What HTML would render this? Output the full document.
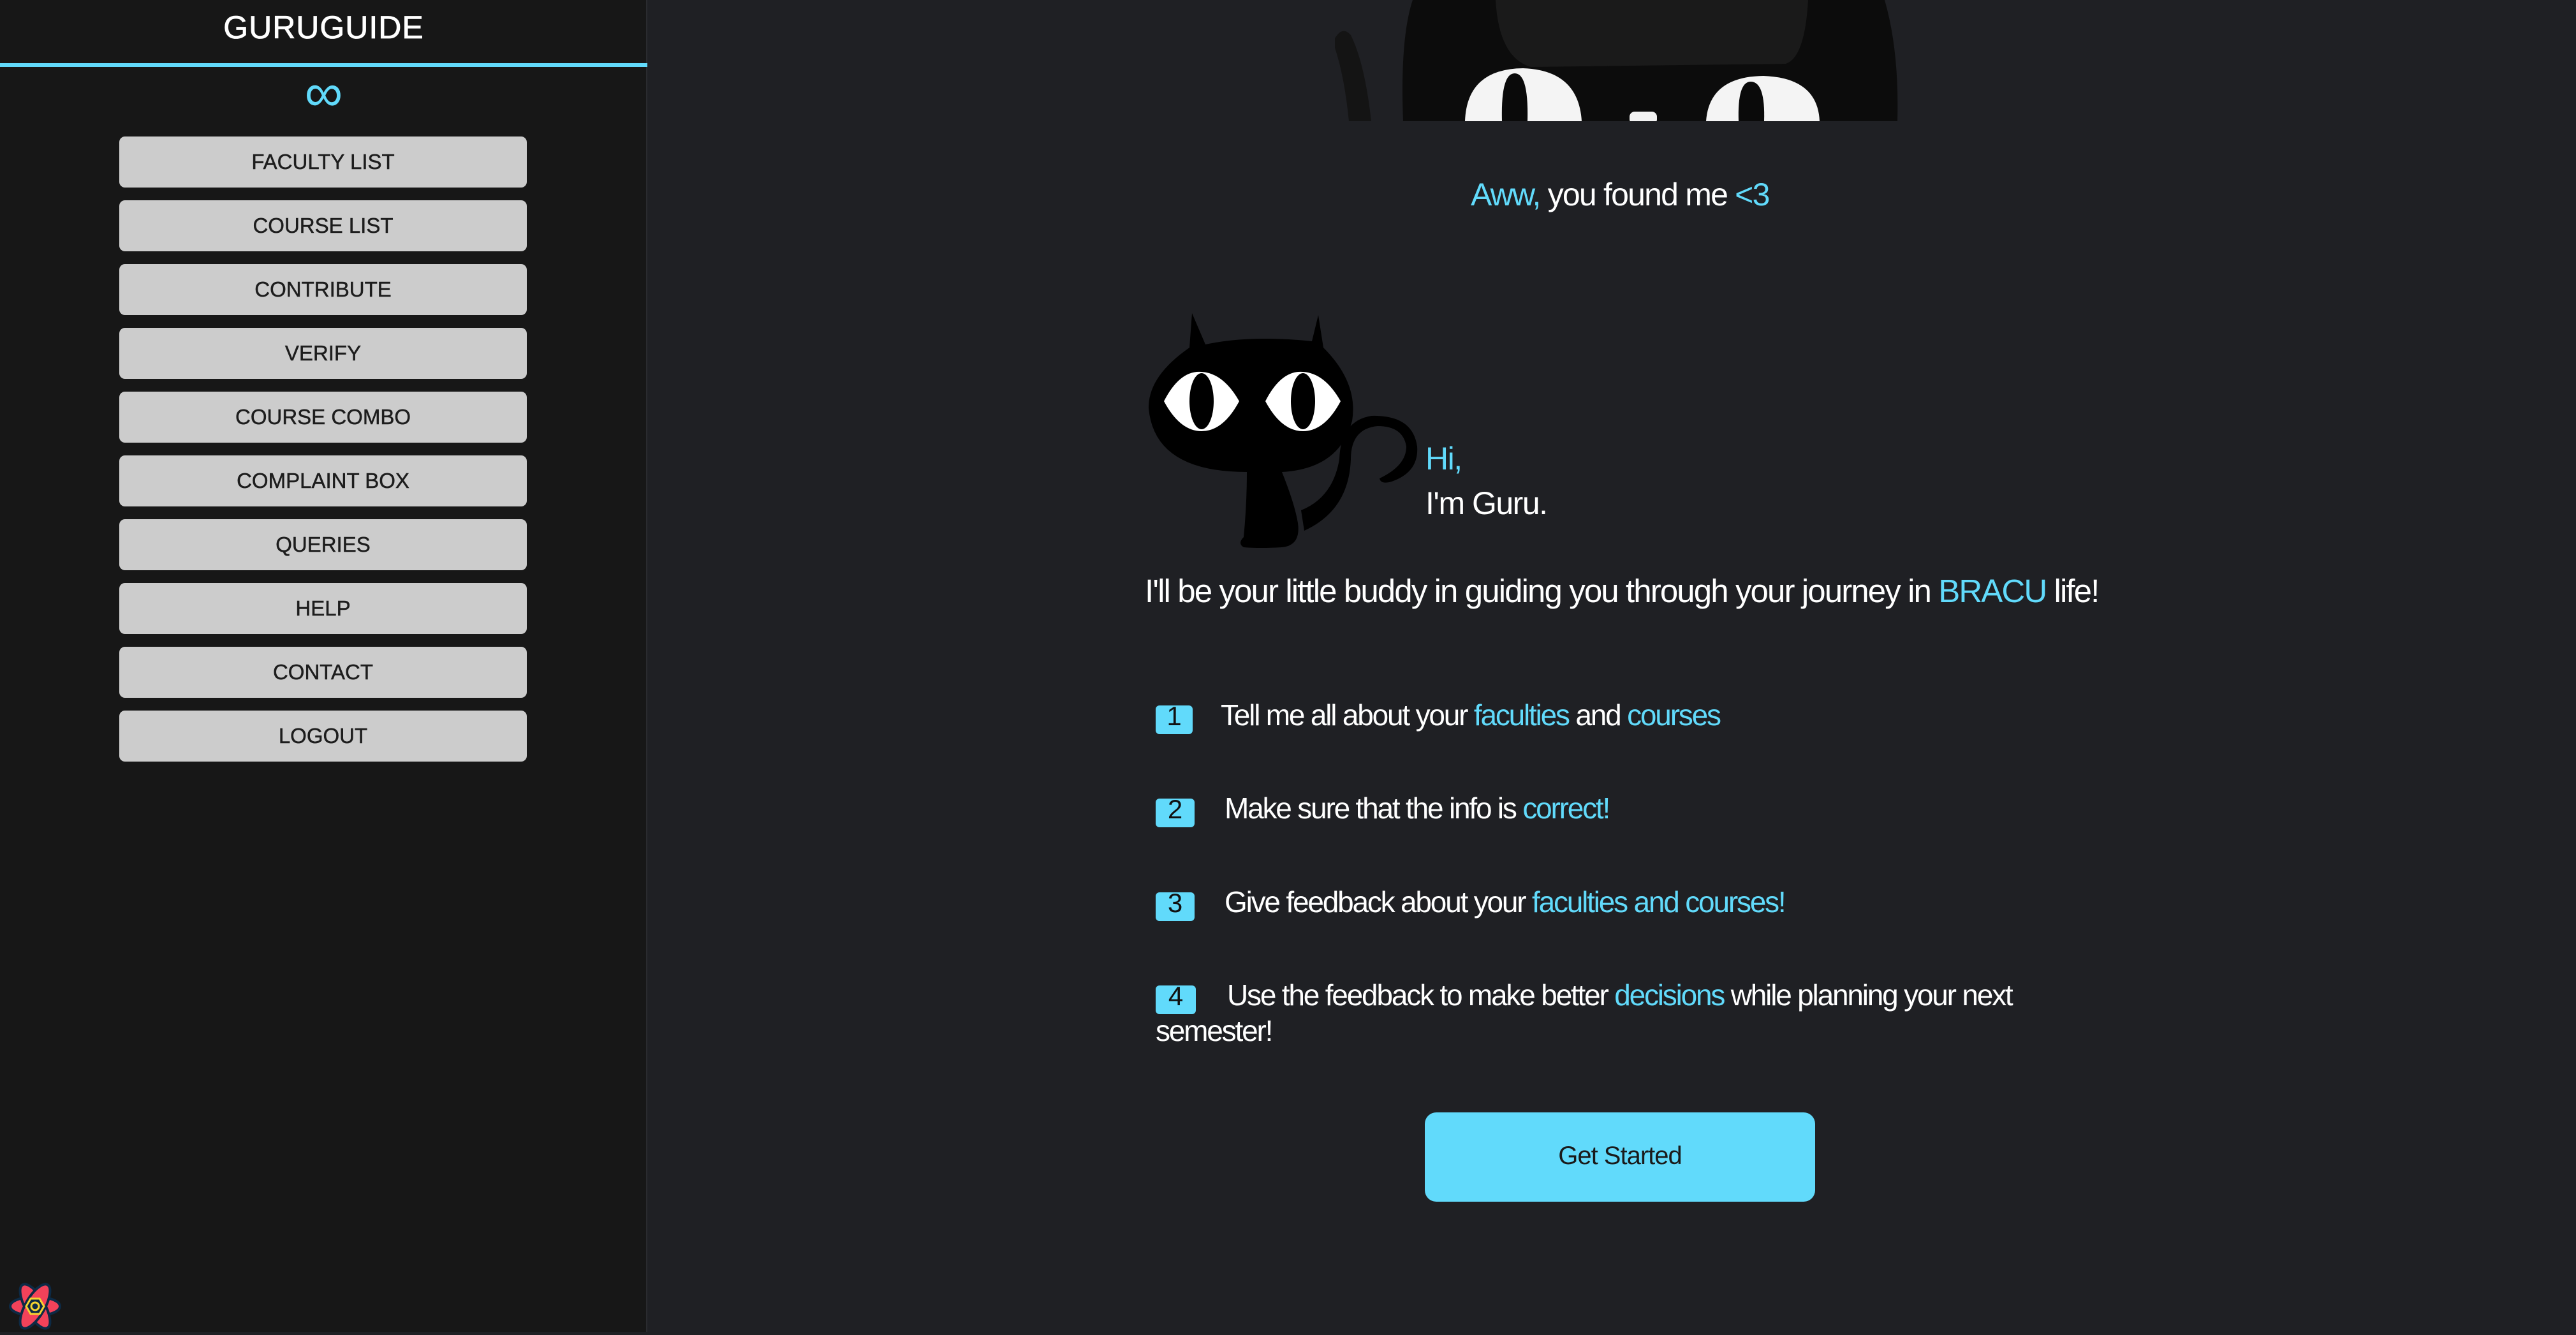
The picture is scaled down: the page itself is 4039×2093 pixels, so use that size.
<!DOCTYPE html>
<html><head><meta charset="utf-8"><style>
html,body{margin:0;padding:0}
body{width:4039px;height:2088px;background:#1f2024;position:relative;overflow:hidden;font-family:"Liberation Sans",sans-serif;color:#fff}
.side{position:absolute;left:0;top:0;width:1015px;height:2088px;background:#171717;border-right:2px solid #2a2b2f;box-sizing:border-box}
.title{position:absolute;left:0;width:1015px;top:14px;text-align:center;font-size:50px;letter-spacing:1px;color:#fff;-webkit-text-stroke:0.8px #fff}
.line{position:absolute;left:0;top:99px;width:1015px;height:6px;background:#61dafb}
.inf{position:absolute;left:0;width:1015px;top:100px;text-align:center;font-size:84px;color:#61dafb;line-height:90px}
.btn{position:absolute;left:187px;width:639px;height:80px;background:#cccccc;border-radius:9px;color:#1d1d1d;font-size:33px;text-align:center;line-height:80px;-webkit-text-stroke:0.5px #1d1d1d}
.c{color:#61dafb}
.t{position:absolute;font-size:46px;letter-spacing:-2.2px;white-space:nowrap}
.b{position:absolute;width:58px;height:45px;background:#61dafb;border-radius:6px;color:#111;font-size:42px;text-align:center;line-height:34px}
.gs{position:absolute;left:2234px;top:1744px;width:612px;height:140px;background:#61dafb;border-radius:18px;color:#1a1a1a;font-size:40px;text-align:center;line-height:136px;letter-spacing:-1px}
</style></head><body>
<div class="side">
<div class="title">GURUGUIDE</div>
<div class="line"></div>
<div class="inf">∞</div>
<div class="btn" style="top:214px">FACULTY LIST</div>
<div class="btn" style="top:314px">COURSE LIST</div>
<div class="btn" style="top:414px">CONTRIBUTE</div>
<div class="btn" style="top:514px">VERIFY</div>
<div class="btn" style="top:614px">COURSE COMBO</div>
<div class="btn" style="top:714px">COMPLAINT BOX</div>
<div class="btn" style="top:814px">QUERIES</div>
<div class="btn" style="top:914px">HELP</div>
<div class="btn" style="top:1014px">CONTACT</div>
<div class="btn" style="top:1114px">LOGOUT</div>
<svg style="position:absolute;left:10px;top:2003px" width="90" height="90" viewBox="-45 -45 90 90">
<g stroke="#0d2a45" stroke-width="4" fill="#f2425a">
<ellipse rx="39" ry="15"/><ellipse rx="39" ry="15" transform="rotate(60)"/><ellipse rx="39" ry="15" transform="rotate(-60)"/>
</g>
<polygon points="14,0 7,12 -7,12 -14,0 -7,-12 7,-12" fill="#0d2a45" stroke="#f5d430" stroke-width="3"/>
<circle r="6" fill="none" stroke="#f5d430" stroke-width="3"/>
</svg>
</div>

<svg style="position:absolute;left:2060px;top:0" width="930" height="190" viewBox="2060 0 930 190">
<path d="M2093 60 Q2105 40 2118 55 Q2140 100 2150 190 L2115 190 Q2108 120 2093 75 Z" fill="#141414"/>
<path d="M2200 190 Q2195 60 2215 0 L2955 0 Q2978 80 2975 190 Z" fill="#0c0c0c"/>
<path d="M2345 0 L2835 0 Q2830 90 2800 100 L2400 105 Q2350 90 2345 0 Z" fill="#1a1a1a"/>
<path d="M2297 190 Q2300 108 2388 107 Q2475 110 2480 190 Z" fill="#f4f4f4"/>
<path d="M2355 190 Q2353 115 2375 115 Q2397 115 2395 190 Z" fill="#0a0a0a"/>
<path d="M2675 190 Q2680 120 2765 119 Q2850 122 2853 190 Z" fill="#f4f4f4"/>
<path d="M2726 190 Q2724 128 2745 128 Q2768 128 2766 190 Z" fill="#0a0a0a"/>
<rect x="2555" y="175" width="43" height="20" rx="8" fill="#f2f2f2"/>
</svg>

<div class="t" style="left:2306px;top:276px;font-size:50px;letter-spacing:-1.8px"><span class="c">Aww,</span> you found me <span class="c">&lt;3</span></div>

<svg style="position:absolute;left:1795px;top:485px" width="440" height="380" viewBox="1795 485 440 380">
<path d="M2040 800 Q2090 780 2100 720 Q2102 660 2150 652 Q2215 650 2222 700 Q2225 740 2182 755 Q2165 760 2163 750 Q2205 730 2205 700 Q2200 668 2160 668 Q2118 672 2118 720 Q2115 800 2045 832 Z" fill="#000"/>
<path d="M1869 491 L1890 540 Q1960 525 2057 535 L2067 494 L2075 545 Q2130 600 2120 660 Q2100 735 2010 740 Q2030 790 2035 820 Q2040 855 2010 858 Q1975 860 1950 858 Q1940 852 1950 842 Q1955 790 1955 740 Q1810 740 1801 640 Q1800 590 1865 545 Z" fill="#000"/>
<path d="M1825 629 Q1850 580 1884 583 Q1918 585 1943 629 Q1918 676 1884 676 Q1850 676 1825 629 Z" fill="#fff"/>
<ellipse cx="1884" cy="629" rx="19" ry="44" fill="#000"/>
<path d="M1984 629 Q2009 580 2043 583 Q2077 585 2102 629 Q2077 676 2043 676 Q2009 676 1984 629 Z" fill="#fff"/>
<ellipse cx="2043" cy="629" rx="19" ry="44" fill="#000"/>
</svg>

<div class="t c" style="left:2235px;top:690px;font-size:50px;letter-spacing:-1.5px">Hi,</div>
<div class="t" style="left:2235px;top:760px;font-size:50px;letter-spacing:-1.5px">I'm Guru.</div>

<div class="t" style="left:1795px;top:897px;font-size:51px;letter-spacing:-1.9px">I'll be your little buddy in guiding you through your journey in <span class="c">BRACU</span> life!</div>

<div class="b" style="left:1812px;top:1106px">1</div>
<div class="t" style="left:1914px;top:1094px">Tell me all about your <span class="c">faculties</span> and <span class="c">courses</span></div>
<div class="b" style="left:1812px;top:1252px;width:61px">2</div>
<div class="t" style="left:1920px;top:1240px">Make sure that the info is <span class="c">correct!</span></div>
<div class="b" style="left:1812px;top:1399px;width:61px">3</div>
<div class="t" style="left:1920px;top:1387px">Give feedback about your <span class="c">faculties and courses!</span></div>
<div class="b" style="left:1812px;top:1545px;width:63px">4</div>
<div class="t" style="left:1924px;top:1533px">Use the feedback to make better <span class="c">decisions</span> while planning your next</div>
<div class="t" style="left:1812px;top:1589px">semester!</div>

<div class="gs">Get Started</div>
</body></html>
